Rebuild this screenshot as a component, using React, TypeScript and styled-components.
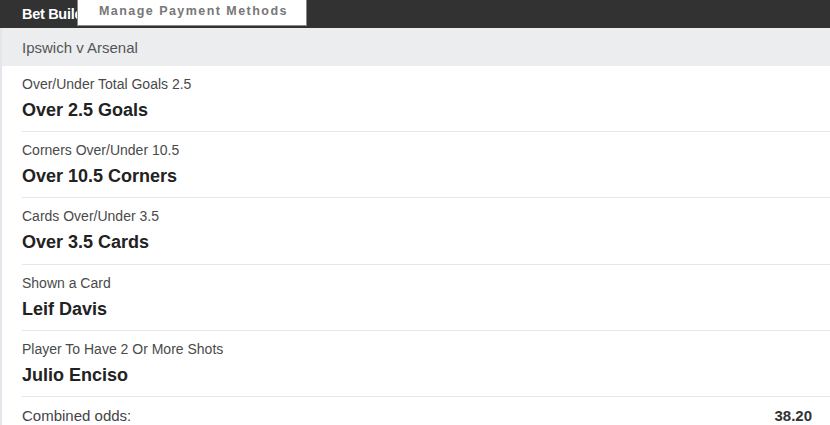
import React from "react";
import styled, { createGlobalStyle } from "styled-components";

const Global = createGlobalStyle`
  html, body { margin: 0; padding: 0; background: #fff; }
  body { font-family: "Liberation Sans", Arial, sans-serif; }
`;

const Page = styled.div`
  width: 830px;
  height: 425px;
  overflow: hidden;
  display: flex;
  flex-direction: column;
  position: relative;
`;

const Header = styled.div`
  height: 28px;
  background: #323232;
  display: flex;
  align-items: center;
  padding-left: 22px;
  color: #fff;
  font-weight: bold;
  font-size: 14.5px;
  letter-spacing: -0.3px;
  flex-shrink: 0;
`;

const Menu = styled.div`
  position: absolute;
  left: 77px;
  top: 0;
  width: 230px;
  height: 26px;
  background: #fff;
  border: 1px solid #8a8a8a;
  border-top: none;
  display: flex;
  align-items: center;
  padding-left: 21px;
  padding-bottom: 4px;
  box-sizing: border-box;
  color: #777;
  font-weight: bold;
  font-size: 12.5px;
  letter-spacing: 1.45px;
  white-space: nowrap;
`;

const Body = styled.div`
  flex: 1;
  border-left: 2px solid #e3e6ea;
  display: flex;
  flex-direction: column;
`;

const MatchBar = styled.div`
  height: 38px;
  background: #ecedef;
  display: flex;
  align-items: center;
  padding-left: 20px;
  font-size: 15px;
  color: #555;
  flex-shrink: 0;
`;

const Row = styled.div`
  margin-left: 20px;
  height: 66.2px;
  box-sizing: border-box;
  border-bottom: 1px solid #e4e7eb;
  display: flex;
  flex-direction: column;
  padding-top: 9px;
  gap: 6px;
  flex-shrink: 0;
`;

const Label = styled.div`
  font-size: 14px;
  color: #4a4a4a;
  line-height: 18px;
`;

const Selection = styled.div`
  font-size: 18px;
  font-weight: bold;
  color: #222;
  line-height: 22px;
`;

const Footer = styled.div`
  display: flex;
  justify-content: space-between;
  align-items: center;
  padding: 0 18px 0 20px;
  height: 38px;
  font-size: 15px;
  color: #444;
`;

const Odds = styled.span`
  font-weight: bold;
  color: #333;
`;

const legs = [
  ["Over/Under Total Goals 2.5", "Over 2.5 Goals"],
  ["Corners Over/Under 10.5", "Over 10.5 Corners"],
  ["Cards Over/Under 3.5", "Over 3.5 Cards"],
  ["Shown a Card", "Leif Davis"],
  ["Player To Have 2 Or More Shots", "Julio Enciso"],
];

export default function App() {
  return (
    <Page>
      <Global />
      <Header>Bet Builder</Header>
      <Menu>Manage Payment Methods</Menu>
      <Body>
        <MatchBar>Ipswich v Arsenal</MatchBar>
        {legs.map(([l, s]) => (
          <Row key={l}>
            <Label>{l}</Label>
            <Selection>{s}</Selection>
          </Row>
        ))}
        <Footer>
          <span>Combined odds:</span>
          <Odds>38.20</Odds>
        </Footer>
      </Body>
    </Page>
  );
}
